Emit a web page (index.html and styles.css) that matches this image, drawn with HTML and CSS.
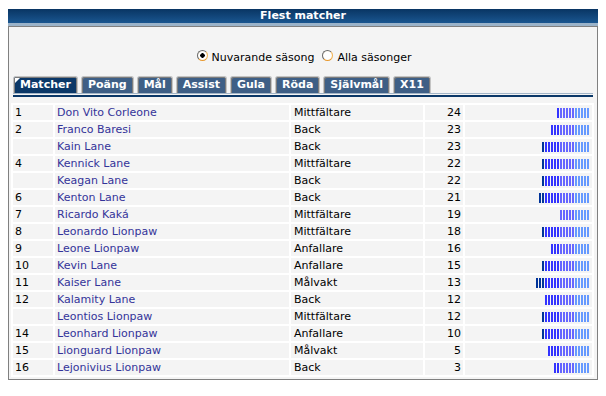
FILE: index.html
```html
<!DOCTYPE html>
<html lang="sv">
<head>
    <meta charset="UTF-8">
    <title>Flest matcher</title>
    <link rel="stylesheet" href="styles.css">
</head>
<body>
    <div class="box">
        <div class="box-title">Flest matcher</div>
        <div class="box-body">
            <form class="season">
                <label><input type="radio" name="season" checked> Nuvarande säsong</label>
                <label><input type="radio" name="season"> Alla säsonger</label>
            </form>

            <ul class="tabs">
                <li class="tab active">Matcher</li>
                <li class="tab">Poäng</li>
                <li class="tab">Mål</li>
                <li class="tab">Assist</li>
                <li class="tab">Gula</li>
                <li class="tab">Röda</li>
                <li class="tab">Självmål</li>
                <li class="tab">X11</li>
            </ul>
            <div class="tab-line"></div>

            <table class="stats">
                <colgroup>
                    <col class="c-rank"><col class="c-name"><col class="c-pos"><col class="c-val"><col class="c-bar">
                </colgroup>
                <tbody id="statsBody"></tbody>
            </table>
        </div>
    </div>

    <script>
        // [placering, namn, position, matcher, staplar]
        const spelare = [
            ['1', 'Don Vito Corleone', 'Mittfältare', 24, 11],
            ['2', 'Franco Baresi', 'Back', 23, 13],
            ['', 'Kain Lane', 'Back', 23, 16],
            ['4', 'Kennick Lane', 'Mittfältare', 22, 16],
            ['', 'Keagan Lane', 'Back', 22, 16],
            ['6', 'Kenton Lane', 'Back', 21, 17],
            ['7', 'Ricardo Kaká', 'Mittfältare', 19, 10],
            ['8', 'Leonardo Lionpaw', 'Mittfältare', 18, 16],
            ['9', 'Leone Lionpaw', 'Anfallare', 16, 13],
            ['10', 'Kevin Lane', 'Anfallare', 15, 16],
            ['11', 'Kaiser Lane', 'Målvakt', 13, 18],
            ['12', 'Kalamity Lane', 'Back', 12, 15],
            ['', 'Leontios Lionpaw', 'Mittfältare', 12, 16],
            ['14', 'Leonhard Lionpaw', 'Anfallare', 10, 16],
            ['15', 'Lionguard Lionpaw', 'Målvakt', 5, 14],
            ['16', 'Lejonivius Lionpaw', 'Back', 3, 12]
        ];

        const tbody = document.getElementById('statsBody');
        spelare.forEach(function (s) {
            const tr = document.createElement('tr');
            tr.innerHTML =
                '<td>' + s[0] + '</td>' +
                '<td><a href="#">' + s[1] + '</a></td>' +
                '<td class="pos">' + s[2] + '</td>' +
                '<td class="val">' + s[3] + '</td>' +
                '<td class="bar"><span class="meter" style="width:' + (s[4] * 3 - 1) + 'px"></span></td>';
            tbody.appendChild(tr);
        });
    </script>
</body>
</html>
```

FILE: styles.css
```css
body {
    margin: 9px 8px;
    background: #fff;
    font-family: 'DejaVu Sans', Verdana, sans-serif;
    font-size: 11px;
    color: #000;
}

.box {
    width: 590px;
}

.box-title {
    height: 14px;
    line-height: 14px;
    text-align: center;
    font-weight: bold;
    color: #fff;
    background: linear-gradient(#093563, #1a5690);
    border-bottom: 3px solid #9bb3c9;
}

.box-body {
    background: #f4f4f4;
    border: 1px solid #808080;
    padding: 24px 0 2px;
}

/* radioknappar */
.season {
    display: flex;
    justify-content: center;
    gap: 8px;
    height: 14px;
    line-height: 14px;
    margin: 0 0 0 2px;
}

.season label {
    display: flex;
    align-items: center;
    gap: 4px;
}

.season input {
    appearance: none;
    width: 11px;
    height: 11px;
    margin: -6px 0 0 0;
    border-radius: 50%;
    border: 1px solid;
    border-color: #6a6a6a #f0b050 #e89a30 #6a6a6a;
    background: radial-gradient(circle, #fff 55%, #fbe6c4);
}

.season input:checked {
    background: radial-gradient(circle, #000 0 2px, #fff 2.5px 55%, #fbe6c4);
}

/* flikar */
.tabs {
    display: flex;
    gap: 3px;
    list-style: none;
    margin: 11px 4px 0 4px;
    padding: 0;
    border-bottom: 1px solid #a3b6c9;
    height: 17px;
}

.tab {
    position: relative;
    height: 16px;
    line-height: 16px;
    padding: 0 6px;
    margin-bottom: -1px;
    color: #fff;
    font-weight: bold;
    background: #3e5f86;
    border: 1px solid #c4c4c4;
    border-bottom: none;
    border-radius: 3px 3px 0 0;
    box-shadow: inset 1px 1px 0 #7c7c7c, inset -1px 0 0 #7c7c7c;
}

.tab.active {
    background: #0b3868;
}

.tab.active::before {
    content: "";
    position: absolute;
    top: 1px;
    left: 1px;
    border-top: 5px solid #fff;
    border-right: 5px solid transparent;
}

.tab-line {
    height: 2px;
    margin: 1px 4px 6px;
    background: #0b3868;
}

/* tabell */
.stats {
    width: 583px;
    margin: 0 3px 0 2px;
    border-collapse: separate;
    border-spacing: 2px;
    background: #fff;
    table-layout: fixed;
}

.c-rank { width: 40px; }
.c-name { width: 234px; }
.c-pos { width: 132px; }
.c-val { width: 38px; }
.c-bar { width: 127px; }

.stats td {
    height: 15px;
    line-height: 15px;
    padding: 0 0 0 2px;
    background: #f4f4f4;
    white-space: nowrap;
    vertical-align: middle;
}

.stats td.pos {
    padding-left: 3px;
}

.stats td.val {
    text-align: right;
    padding: 0 2px 0 0;
}

.stats td.bar {
    text-align: right;
    padding: 0 3px 0 0;
}

.stats a {
    color: #333399;
    text-decoration: none;
}

.meter {
    display: inline-block;
    height: 10px;
    vertical-align: middle;
    margin-top: -1px;
    background:
        repeating-linear-gradient(to left, transparent 0 2px, #f4f4f4 2px 3px),
        linear-gradient(to left, #6699ff 0 15px, #6666ff 15px 30px, #3333ff 30px 45px, #003399 45px);
}
```
